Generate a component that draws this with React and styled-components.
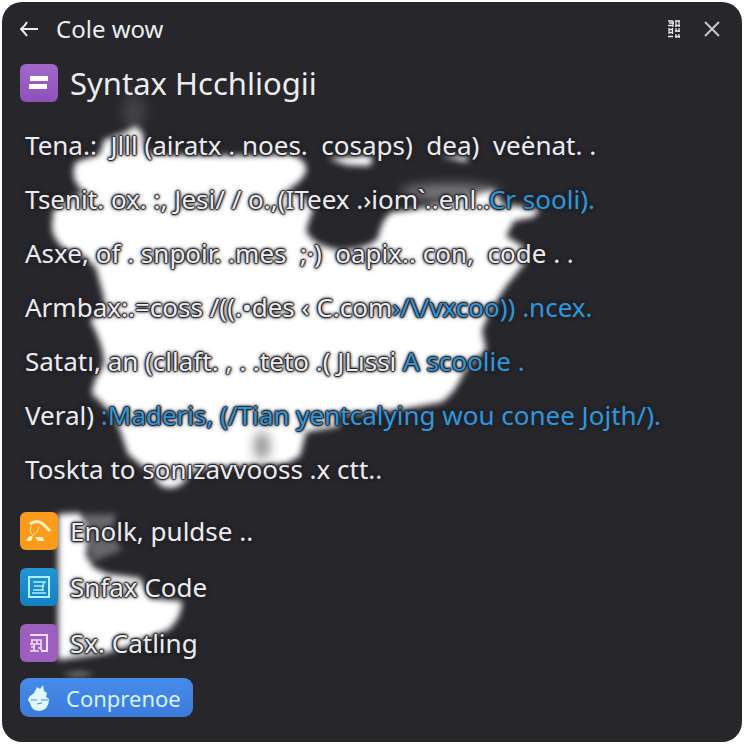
import React from "react";
import styled, { createGlobalStyle } from "styled-components";

const GlobalStyle = createGlobalStyle`
    *{
        box-sizing: border-box;
    }
    body{
        margin: 0;
        background: #ffffff;
        font-family: 'Noto Sans', 'Open Sans', sans-serif;
    }
    h1, p, ul{
        margin: 0;
        padding: 0;
    }
`
const Panel=styled.main`
    position: relative;
    display: flex;
    flex-direction: column;
    min-height: calc(100vh - 5px);
    margin: 2px 3px 3px 2px;
    padding: 8px 18px 22px;
    overflow: hidden;
    border-radius: 20px;
    background: #26262b;
    color: #ececef;
`
const Glow=styled.svg`
    position: absolute;
    top: 0;
    left: 0;
    pointer-events: none;
`
const Header=styled.header`
    position: relative;
    display: flex;
    align-items: center;
    gap: 16px;
    height: 38px;
`
const IconButton=styled.button`
    display: flex;
    padding: 0;
    border: 0;
    background: none;
    color: ${props => props.$color || '#ececef'};
    cursor: pointer;
`
const HeaderTitle=styled.span`
    flex: 1;
    font-size: 24px;
    line-height: 32px;
`
const HeaderActions=styled.div`
    display: flex;
    align-items: center;
    gap: 24px;
    padding-right: 4px;
`
const Heading=styled.div`
    position: relative;
    display: flex;
    align-items: center;
    gap: 12px;
    margin-top: 15px;
`
const Title=styled.h1`
    font-weight: 400;
    font-size: 31px;
    line-height: 40px;
`
const Badge=styled.span`
    display: flex;
    flex: none;
    align-items: center;
    justify-content: center;
    width: 38px;
    height: 38px;
    border-radius: 6px;
    background: ${props => props.$bg};
`
const Lines=styled.div`
    position: relative;
    margin-top: 15px;
    padding-left: 5px;
`
const outline = `
    text-shadow: 1px 0 1px #26262b, -1px 0 1px #26262b, 0 1px 1px #26262b,
        0 -1px 1px #26262b, 0 0 3px #26262b, 0 0 3px #26262b, 0 0 5px #26262b;
`
const Line=styled.p`
    font-size: 26px;
    line-height: 54px;
    white-space: pre;
    ${outline}
`
const Accent=styled.span`
    color: #2f96dc;
`
const List=styled.ul`
    position: relative;
    display: flex;
    flex-direction: column;
    gap: 18px;
    margin-top: 16px;
    list-style: none;
`
const Item=styled.li`
    display: flex;
    align-items: center;
    gap: 12px;
    font-size: 26px;
    line-height: 38px;
    ${outline}
`
const Submit=styled.button`
    position: relative;
    display: flex;
    align-items: center;
    align-self: flex-start;
    gap: 16px;
    height: 39px;
    margin-top: 16px;
    padding: 0 12px 0 8px;
    border: 0;
    border-radius: 9px;
    background: linear-gradient(#478be8, #3c7bdc);
    color: #d5f3ff;
    font-family: inherit;
    font-size: 22px;
    cursor: pointer;
`

const lines = [
    ["Tena.:  Jlll (airatx . noes.  cosaps)  dea)  veėnat. ."],
    ["Tsenit. ox. :, Jesi/ / o.,(ITeex .›iom .̀.enl..", "Cr sooli)."],
    ["Asxe, of . snpoir. .mes  ;·)  oapix.. con,  code . ."],
    ["Armbax:.=coss /((.•des ‹ C.com", "›/\\/vxcoo)) .ncex."],
    ["Satatı, an (cllaft. , . .teto .( JLıssi ", "A scoolie ."],
    ["Veral) ", ":Maderis, (/Tian yentcalying wou conee Jojth/)."],
    ["Toskta to sonızavvooss .x ctt.."],
]

function BackIcon(){
    return(
        <svg width="20" height="20" viewBox="0 0 20 20" fill="none" stroke="currentColor" strokeWidth="2">
            <path d="M18 10H1M7 3Q5 7 1 10Q4 13 7 17"/>
        </svg>
    )
}

function GridIcon(){
    return(
        <svg width="12" height="18" viewBox="0 0 12 18" fill="none" stroke="currentColor">
            <path d="M0 1H5M7 1H12M1 3H6M0 5.5H5M1 9.5H5M1 12.5H5M0 16.5H5" strokeWidth="1.4"/>
            <path d="M5 1V7M8 1V7M11 1V7M1 8V14M4.5 8V14M8 8V12M11 8V12M8 14V18M11 14V18" strokeWidth="1.2"/>
            <path d="M7 5.5H12M7 11H12M7 16.5H12" strokeWidth="1.6"/>
        </svg>
    )
}

function CloseIcon(){
    return(
        <svg width="16" height="16" viewBox="0 0 16 16" fill="none" stroke="currentColor" strokeWidth="2">
            <path d="M1 1L15 15M15 1L1 15"/>
        </svg>
    )
}

function EqualsIcon(){
    return(
        <svg width="20" height="14" viewBox="0 0 20 14" fill="#ffffff">
            <path d="M1 0H19V5H1ZM0 8H18V13H0Z"/>
        </svg>
    )
}

function ToolIcon(){
    return(
        <svg width="26" height="24" viewBox="0 0 26 24" fill="none" stroke="#fff4c8">
            <path d="M4 5Q11 0 17 5Q20 8 24 12" strokeWidth="3"/>
            <path d="M5 7Q3 14 7 16Q12 14 13 8M7 16L2 21" strokeWidth="1" opacity="0.8"/>
            <path d="M0 21L4 17L7 18L5 22H1ZM9 18L17 18L18 22L12 22Z" fill="#fff4c8" stroke="none"/>
        </svg>
    )
}

function PageIcon(){
    return(
        <svg width="22" height="22" viewBox="0 0 22 22" fill="none" stroke="#a9f0ff" strokeWidth="2">
            <path d="M1 1H21V21H1Z"/>
            <path d="M5 6H18M6 10H16M5 14H16M4 17H18M16 6L14 15" strokeWidth="1.6"/>
        </svg>
    )
}

function CodeIcon(){
    return(
        <svg width="20" height="20" viewBox="0 0 20 20" fill="none" stroke="#f6dcff" strokeWidth="2">
            <path d="M1 2H18V18H12"/>
            <path d="M2 7H12V17M1 11H12M2 14H6M9 15H12M1 18H10M3 7V11M8 7V11M5 11V18" strokeWidth="1.6"/>
        </svg>
    )
}

function FlameIcon(){
    return(
        <svg width="22" height="26" viewBox="0 0 22 26">
            <path d="M1 12L6 8L9 2L12 4L15 0L16 6L19 8L18 12L21 14Q21 25 11 26Q3 25 2 18L0 15Z" fill="#e2f8ff"/>
            <path d="M3 15H9M13 15H20M9 19L14 18" stroke="#478be8" strokeWidth="1" fill="none"/>
        </svg>
    )
}

function GlowShape(){
    return(
        <Glow width="740" height="740" viewBox="2 2 740 740" fill="#ffffff" aria-hidden="true">
            <defs>
                <filter id="soft" x="-10%" y="-10%" width="120%" height="120%">
                    <feGaussianBlur stdDeviation="3"/>
                </filter>
                <filter id="softer" x="-100%" y="-200%" width="300%" height="500%">
                    <feGaussianBlur stdDeviation="6"/>
                </filter>
            </defs>
            <g filter="url(#soft)">
                <path d="M104 140L126 132L135 126L142 132L146 152Q200 158 290 154Q308 160 306 172Q300 184 286 190Q320 200 312 212L306 230Q312 246 340 250Q370 248 378 238Q382 218 392 212Q430 208 460 198L494 190L502 204L540 209L534 217L514 221L506 236L522 246Q530 258 524 264L506 286L490 312L482 330L486 350L464 372Q456 392 442 402L400 410L336 416L340 426L306 432L300 456L286 464L210 468L190 474Q182 488 170 488Q158 488 154 476L128 454L120 430Q112 410 92 394Q92 382 104 364Q104 346 90 320Q106 310 104 298L96 268L84 256Q58 252 52 230Q52 208 58 204L84 192Q68 178 76 162L100 154Z"/>
                <path d="M328 158L370 155Q376 162 368 166L346 165ZM440 156L466 155L468 162Z"/>
                <path d="M58 514L80 513L88 530L86 556L94 568L108 574L140 578L150 598L182 601Q182 618 168 630L130 646L102 654L58 660ZM62 675Q80 671 94 675Z"/>
                <path d="M84 514L116 514L112 534L122 550L92 562Z" opacity="0.3"/>
            </g>
            <ellipse cx="262" cy="446" rx="8" ry="14" fill="#26262b" opacity="0.5" filter="url(#softer)"/>
            <ellipse cx="134" cy="112" rx="12" ry="18" opacity="0.12" filter="url(#softer)"/>
            <ellipse cx="450" cy="192" rx="50" ry="8" opacity="0.4" filter="url(#softer)"/>
        </Glow>
    )
}

export default function App(){

    return(
        <>
            <GlobalStyle/>
            <Panel>
                <GlowShape/>
                <Header>
                    <IconButton type="button" aria-label="Back"><BackIcon/></IconButton>
                    <HeaderTitle>Cole wow</HeaderTitle>
                    <HeaderActions>
                        <IconButton type="button" aria-label="Grid"><GridIcon/></IconButton>
                        <IconButton type="button" aria-label="Close" $color="#c4c8cc"><CloseIcon/></IconButton>
                    </HeaderActions>
                </Header>
                <Heading>
                    <Badge $bg="linear-gradient(#a168c9, #8d51b8)"><EqualsIcon/></Badge>
                    <Title>Syntax Hcchliogii</Title>
                </Heading>
                <Lines>
                    {lines.map(([text, accent]) => (
                        <Line key={text}>{text}{accent && <Accent>{accent}</Accent>}</Line>
                    ))}
                </Lines>
                <List>
                    <Item><Badge $bg="#fb9b1c"><ToolIcon/></Badge>Enolk, puldse ..</Item>
                    <Item><Badge $bg="linear-gradient(#2494d2, #1480c0)"><PageIcon/></Badge>Snfax Code</Item>
                    <Item><Badge $bg="#9c5fbd"><CodeIcon/></Badge>Sx. Catling</Item>
                </List>
                <Submit type="button"><FlameIcon/>Conprenoe</Submit>
            </Panel>
        </>
    )
}
